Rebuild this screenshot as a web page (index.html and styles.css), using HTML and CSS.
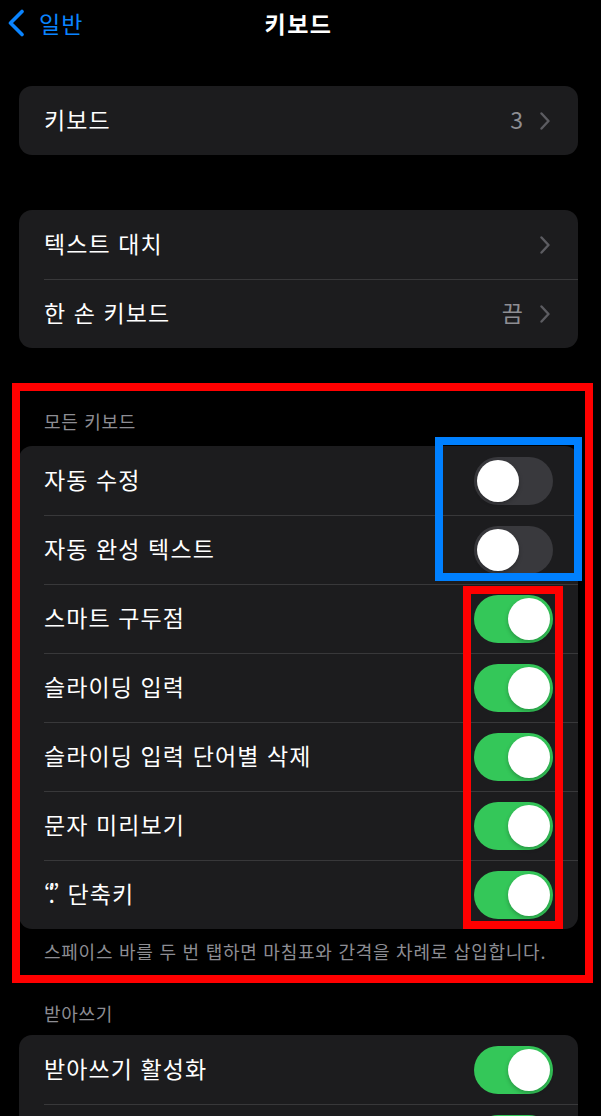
FILE: index.html
```html
<!DOCTYPE html>
<html lang="ko">
<head>
<meta charset="utf-8">
<title>키보드</title>
<link rel="stylesheet" href="styles.css">
</head>
<body>
<div class="screen">
  <header class="nav">
    <a class="back">
      <svg class="back-icon" width="18" height="28" viewBox="0 0 18 28"><polyline points="15,2.5 3.5,14 15,25.5" fill="none" stroke="#0a84ff" stroke-width="3.6" stroke-linecap="round" stroke-linejoin="round"/></svg>
      <span>일반</span>
    </a>
    <h1 class="title">키보드</h1>
  </header>

  <section class="group g-first">
    <div class="row">
      <span class="label">키보드</span>
      <span class="value">3</span>
      <svg class="chev" width="10" height="18" viewBox="0 0 10 18"><polyline points="1.5,1.5 8.5,9 1.5,16.5" fill="none" stroke="#5c5c61" stroke-width="2.4" stroke-linecap="round" stroke-linejoin="round"/></svg>
    </div>
  </section>

  <section class="group g-second">
    <div class="row">
      <span class="label">텍스트 대치</span>
      <svg class="chev" width="10" height="18" viewBox="0 0 10 18"><polyline points="1.5,1.5 8.5,9 1.5,16.5" fill="none" stroke="#5c5c61" stroke-width="2.4" stroke-linecap="round" stroke-linejoin="round"/></svg>
    </div>
    <div class="row">
      <span class="label">한 손 키보드</span>
      <span class="value">끔</span>
      <svg class="chev" width="10" height="18" viewBox="0 0 10 18"><polyline points="1.5,1.5 8.5,9 1.5,16.5" fill="none" stroke="#5c5c61" stroke-width="2.4" stroke-linecap="round" stroke-linejoin="round"/></svg>
    </div>
  </section>

  <h2 class="section-head sh-all">모든 키보드</h2>
  <section class="group">
    <div class="row"><span class="label">자동 수정</span><span class="switch"></span></div>
    <div class="row"><span class="label">자동 완성 텍스트</span><span class="switch"></span></div>
    <div class="row"><span class="label">스마트 구두점</span><span class="switch on"></span></div>
    <div class="row"><span class="label">슬라이딩 입력</span><span class="switch on"></span></div>
    <div class="row"><span class="label">슬라이딩 입력 단어별 삭제</span><span class="switch on"></span></div>
    <div class="row"><span class="label">문자 미리보기</span><span class="switch on"></span></div>
    <div class="row"><span class="label"><span class="quote">“.”</span> 단축키</span><span class="switch on"></span></div>
  </section>
  <p class="section-foot">스페이스 바를 두 번 탭하면 마침표와 간격을 차례로 삽입합니다.</p>

  <h2 class="section-head sh-dict">받아쓰기</h2>
  <section class="group">
    <div class="row"><span class="label">받아쓰기 활성화</span><span class="switch on"></span></div>
    <div class="row"><span class="label"></span><span class="switch on"></span></div>
  </section>

  <div class="mark mark-red-big"></div>
  <div class="mark mark-blue"></div>
  <div class="mark mark-red-small"></div>
</div>
</body>
</html>
```

FILE: styles.css
```css
html, body {
  margin: 0;
  padding: 0;
  background: #000;
}
body {
  height: 1116px;
  overflow: hidden;
  font-family: "Noto Sans CJK KR", "Noto Sans", sans-serif;
  color: #fff;
}
.screen {
  position: relative;
  padding: 0 23px 0 19px;
}
.nav {
  position: relative;
  height: 46px;
  display: flex;
  align-items: center;
  justify-content: center;
}
.back {
  position: absolute;
  left: -12px;
  top: 9px;
  display: flex;
  align-items: center;
  gap: 14px;
  color: #0a84ff;
  font-size: 23px;
  letter-spacing: 1px;
  line-height: 28px;
}
.back span {
  margin-top: -1px;
}
.title {
  margin: 0;
  font-size: 23px;
  font-weight: 700;
  letter-spacing: 1.5px;
  line-height: 28px;
}
.group {
  background: #1c1c1e;
  border-radius: 13px;
  overflow: hidden;
}
.g-first {
  margin-top: 40px;
}
.g-second {
  margin-top: 55px;
}
.row {
  height: 69px;
  box-sizing: border-box;
  display: flex;
  align-items: center;
  padding: 0 25px 0 25px;
  position: relative;
}
.row + .row::before {
  content: "";
  position: absolute;
  left: 25px;
  right: 0;
  top: 0;
  height: 1px;
  background: #38383a;
}
.label {
  flex: 1;
  font-size: 23px;
  letter-spacing: 1.1px;
  line-height: 30px;
  color: #fff;
  margin-top: -3px;
}
.quote {
  letter-spacing: -0.28em;
  margin-right: 0.3em;
}
.value {
  font-size: 23px;
  color: #8e8e93;
  margin-right: 17px;
  margin-top: -3px;
}
.chev {
  margin-right: 3px;
}
.switch {
  width: 79px;
  height: 48px;
  border-radius: 24px;
  background: #39393d;
  position: relative;
  flex: none;
}
.switch::after {
  content: "";
  position: absolute;
  top: 3px;
  left: 3px;
  width: 42px;
  height: 42px;
  border-radius: 50%;
  background: #fff;
  box-shadow: 0 2px 4px rgba(0, 0, 0, 0.25);
}
.switch.on {
  background: #34c759;
}
.switch.on::after {
  left: 34px;
}
.section-head {
  margin: 0 0 13px 25px;
  font-size: 18px;
  letter-spacing: 0.7px;
  font-weight: 400;
  line-height: 24px;
  color: #8d8d93;
}
.sh-all {
  margin-top: 61px;
}
.sh-dict {
  margin-top: 38px;
  margin-bottom: 10px;
}
.section-foot {
  margin: 10px 0 0 25px;
  font-size: 18px;
  letter-spacing: 0.75px;
  line-height: 24px;
  color: #8d8d93;
}
.mark {
  position: absolute;
  box-sizing: border-box;
  border: 8px solid #ff0000;
  pointer-events: none;
}
.mark-red-big {
  left: 12px;
  top: 383px;
  width: 581px;
  height: 600px;
}
.mark-blue {
  left: 435px;
  top: 437px;
  width: 147px;
  height: 144px;
  border-color: #0080ff;
}
.mark-red-small {
  left: 463px;
  top: 586px;
  width: 100px;
  height: 343px;
}
```
